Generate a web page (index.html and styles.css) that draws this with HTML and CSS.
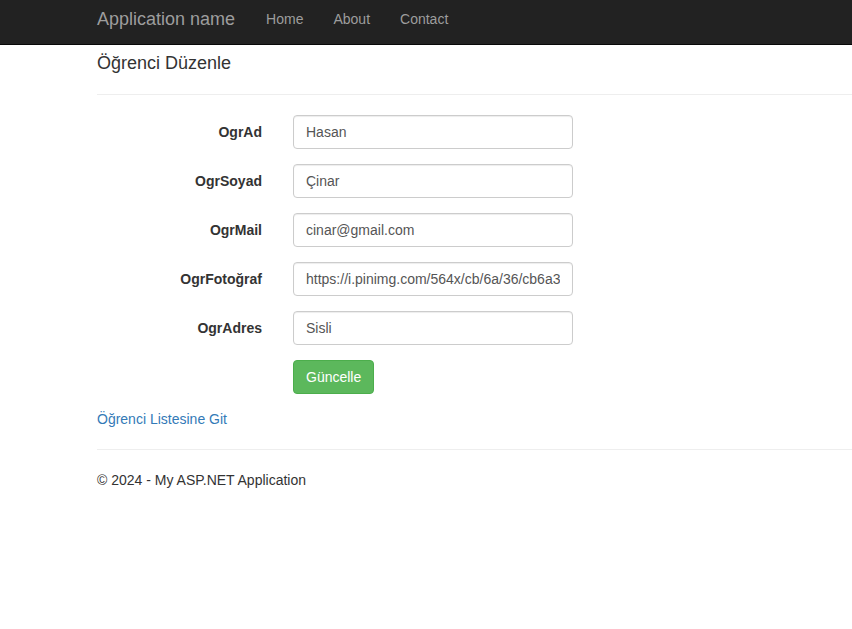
FILE: index.html
```html
<!DOCTYPE html>
<html lang="tr">
<head>
<meta charset="utf-8">
<title>Öğrenci Düzenle</title>
<link rel="stylesheet" href="styles.css">
</head>
<body>
<nav class="navbar">
  <div class="nav-inner">
    <a class="brand" href="#">Application name</a>
    <ul class="nav-links">
      <li><a href="#">Home</a></li>
      <li><a href="#">About</a></li>
      <li><a href="#">Contact</a></li>
    </ul>
  </div>
</nav>
<div class="body-content">
  <h4 class="title">Öğrenci Düzenle</h4>
  <hr class="rule">
  <form class="form">
    <div class="form-group">
      <label class="label">OgrAd</label>
      <input class="input" type="text" value="Hasan">
    </div>
    <div class="form-group">
      <label class="label">OgrSoyad</label>
      <input class="input" type="text" value="Çinar">
    </div>
    <div class="form-group">
      <label class="label">OgrMail</label>
      <input class="input" type="text" value="cinar@gmail.com">
    </div>
    <div class="form-group">
      <label class="label">OgrFotoğraf</label>
      <input class="input" type="text" value="https://i.pinimg.com/564x/cb/6a/36/cb6a3">
    </div>
    <div class="form-group">
      <label class="label">OgrAdres</label>
      <input class="input" type="text" value="Sisli">
    </div>
    <div class="form-group">
      <span class="label"></span>
      <button class="btn-success" type="button">Güncelle</button>
    </div>
  </form>
  <div class="back"><a class="link" href="#">Öğrenci Listesine Git</a></div>
  <hr class="rule">
  <footer class="footer">
    <p class="copy">© 2024 - My ASP.NET Application</p>
  </footer>
</div>
</body>
</html>
```
FILE: styles.css
```css
* { box-sizing: border-box; }
html, body { margin: 0; padding: 0; }
body {
  font-family: "Liberation Sans", Arial, Helvetica, sans-serif;
  font-size: 14px;
  line-height: 20px;
  color: #333;
  background: #fff;
}
.navbar {
  height: 45px;
  background: #222;
  border-bottom: 1px solid #080808;
}
.nav-inner {
  display: flex;
  align-items: flex-start;
  padding-left: 82px;
}
.brand {
  display: block;
  padding: 9px 16px 15px 15px;
  font-size: 18px;
  line-height: 20px;
  color: #9d9d9d;
  text-decoration: none;
}
.nav-links {
  display: flex;
  list-style: none;
  margin: 0;
  padding: 0;
}
.nav-links a {
  display: block;
  padding: 9px 15px 15px;
  line-height: 20px;
  color: #9d9d9d;
  text-decoration: none;
}
.body-content {
  padding-left: 97px;
}
.title {
  margin: 9px 0 10px;
  font-size: 18px;
  font-weight: 500;
  line-height: 19.8px;
}
.rule {
  margin: 20px 0;
  border: 0;
  border-top: 1px solid #eee;
  height: 0;
}
.form { margin: 0; }
.form-group {
  display: flex;
  align-items: flex-start;
  gap: 31px;
  margin-bottom: 15px;
}
.label {
  width: 165px;
  padding-top: 7px;
  text-align: right;
  font-weight: bold;
  line-height: 20px;
}
.input {
  width: 280px;
  height: 34px;
  padding: 6px 12px;
  font-family: inherit;
  font-size: 14px;
  line-height: 20px;
  color: #555;
  background: #fff;
  border: 1px solid #ccc;
  border-radius: 4px;
  box-shadow: inset 0 1px 1px rgba(0,0,0,.075);
  outline: none;
}
.btn-success {
  height: 34px;
  padding: 6px 12px;
  font-family: inherit;
  font-size: 14px;
  line-height: 20px;
  color: #fff;
  background: #5cb85c;
  border: 1px solid #4cae4c;
  border-radius: 4px;
  cursor: pointer;
}
.back { line-height: 20px; }
.link { color: #337ab7; text-decoration: none; }
.copy { margin: 0 0 10px; }
```
